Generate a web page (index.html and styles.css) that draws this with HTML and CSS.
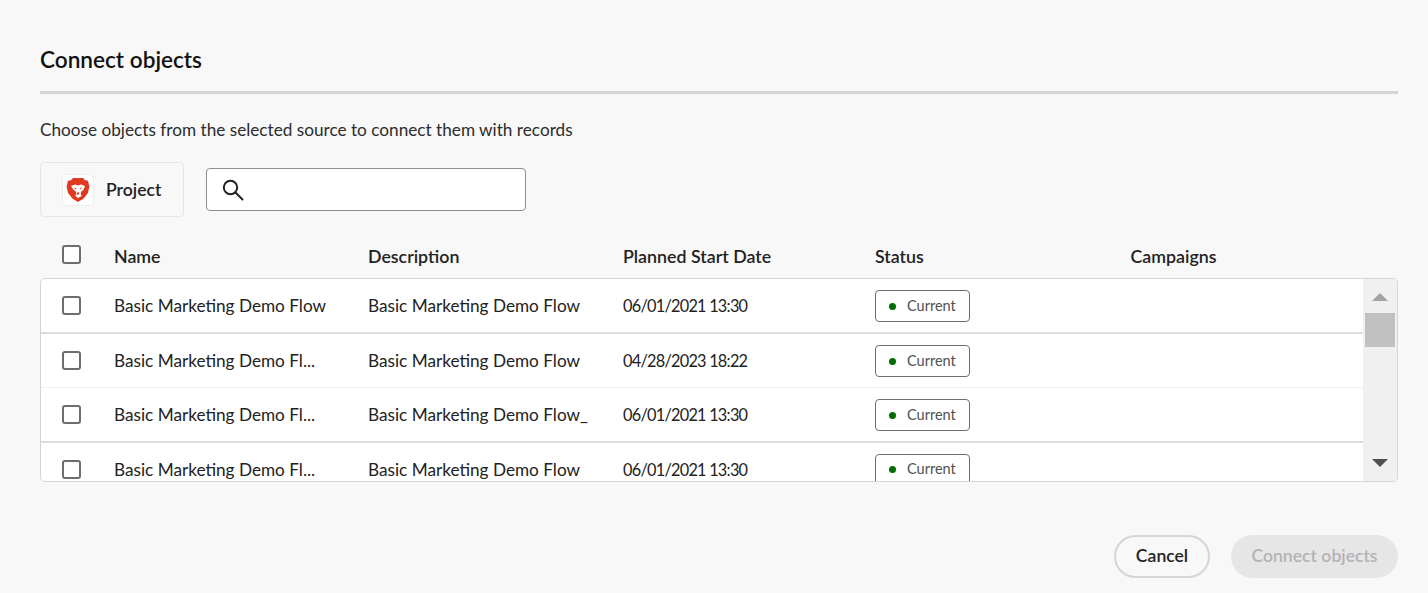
FILE: index.html
```html
<!DOCTYPE html>
<html lang="en">

<head>
    <meta charset="UTF-8">
    <title>Connect objects</title>
    <link rel="stylesheet" href="styles.css">
</head>

<body>
    <div class="dialog">
        <h2 class="title">Connect objects</h2>
        <div class="divider"></div>
        <p class="intro">Choose objects from the selected source to connect them with records</p>

        <div class="toolbar">
            <div class="source">
                <span class="source-logo">
                    <svg width="24" height="26" viewBox="0 0 24 26">
                        <path fill="#e0391f" d="M7 1h10l2 2.2 3 .6 1.4 6-1.6 6.4-4.4 5.6L12 25l-5.4-3.2-4.400-5.600L.6 9.800 2 3.800l3-.6z"/>
                        <path fill="#fff" d="M5 9l4-1.600 3 1 3-1 4 1.600-1.600 4-2 1.200-.8 3.200 1.400 1.400L12 21l-3-2.200 1.400-1.400-.8-3.200-2-1.200z"/>
                        <path fill="#e0391f" d="M7.800 10.600l2.700.6-.6 1.400zM16.200 10.600l-2.700.6.6 1.400zM10.500 17l1.500.8 1.500-.8-1.500-2.400z"/>
                    </svg>
                </span>
                <span class="source-name">Project</span>
            </div>
            <div class="search">
                <svg width="22" height="22" viewBox="0 0 22 22" fill="none" stroke="#222" stroke-width="2">
                    <circle cx="8.500" cy="8.500" r="6.700"/>
                    <path d="M13.500 13.500l7 7" stroke-linecap="round"/>
                </svg>
            </div>
        </div>

        <div class="table-head">
            <div class="cell-check"><span class="checkbox"></span></div>
            <div class="col-name">Name</div>
            <div class="col-desc">Description</div>
            <div class="col-date">Planned Start Date</div>
            <div class="col-status">Status</div>
            <div class="col-camp">Campaigns</div>
        </div>

        <div class="table-box">
            <div class="rows">
                <div class="row line-dark">
                    <div class="cell-check"><span class="checkbox"></span></div>
                    <div class="col-name">Basic Marketing Demo Flow</div>
                    <div class="col-desc"><span class="clip">Basic Marketing Demo Flow</span></div>
                    <div class="col-date">06/01/2021 13:30</div>
                    <div class="col-status"><span class="badge"><i class="dot"></i>Current</span></div>
                </div>
                <div class="row line-light">
                    <div class="cell-check"><span class="checkbox"></span></div>
                    <div class="col-name">Basic Marketing Demo Fl...</div>
                    <div class="col-desc"><span class="clip">Basic Marketing Demo Flow</span></div>
                    <div class="col-date">04/28/2023 18:22</div>
                    <div class="col-status"><span class="badge"><i class="dot"></i>Current</span></div>
                </div>
                <div class="row line-dark">
                    <div class="cell-check"><span class="checkbox"></span></div>
                    <div class="col-name">Basic Marketing Demo Fl...</div>
                    <div class="col-desc"><span class="clip">Basic Marketing Demo Flow_</span></div>
                    <div class="col-date">06/01/2021 13:30</div>
                    <div class="col-status"><span class="badge"><i class="dot"></i>Current</span></div>
                </div>
                <div class="row line-none">
                    <div class="cell-check"><span class="checkbox"></span></div>
                    <div class="col-name">Basic Marketing Demo Fl...</div>
                    <div class="col-desc"><span class="clip">Basic Marketing Demo Flow</span></div>
                    <div class="col-date">06/01/2021 13:30</div>
                    <div class="col-status"><span class="badge"><i class="dot"></i>Current</span></div>
                </div>
            </div>
            <div class="scrollbar">
                <span class="arrow-up"></span>
                <span class="thumb"></span>
                <span class="spacer"></span>
                <span class="arrow-down"></span>
            </div>
        </div>

        <div class="footer">
            <button class="btn-cancel">Cancel</button>
            <button class="btn-connect">Connect objects</button>
        </div>
    </div>
</body>

</html>
```

FILE: styles.css
```css
* {
    box-sizing: border-box;
}

html,
body {
    margin: 0;
    height: 100%;
}

body {
    background-color: #f8f8f8;
    color: #222;
    font-family: "Lato", sans-serif;
    font-size: 17.200px;
    overflow: hidden;
}

.dialog {
    padding: 44px 30px 0 40px;
}

.title {
    margin: 0;
    font-size: 22.600px;
    line-height: 32px;
    font-weight: 600;
    color: #111;
}

.divider {
    height: 3px;
    margin-top: 15px;
    background-color: #d5d5d5;
}

.intro {
    margin: 24px 0 0;
    font-size: 17.200px;
    line-height: 24px;
    color: #2c2c2c;
}

/* Source picker and search */
.toolbar {
    display: flex;
    align-items: center;
    gap: 22px;
    margin-top: 20px;
}

.source {
    display: flex;
    align-items: center;
    gap: 12px;
    width: 144px;
    height: 55px;
    padding-left: 21px;
    border: 1px solid #e6e6e6;
    border-radius: 4px;
}

.source-logo {
    display: flex;
    align-items: center;
    justify-content: center;
    width: 32px;
    height: 32px;
    background-color: #fff;
    border: 1px solid #eee;
    border-radius: 5px;
}

.source-name {
    font-size: 17.600px;
    font-weight: 600;
}

.search {
    display: flex;
    align-items: center;
    width: 320px;
    height: 43px;
    padding-left: 15px;
    background-color: #fff;
    border: 1px solid #8e8e8e;
    border-radius: 4px;
}

/* Table */
.table-head,
.row {
    display: flex;
    align-items: center;
}

.table-head {
    height: 61px;
    padding-top: 17px;
    padding-left: 1px;
    font-weight: 600;
    font-size: 17.800px;
}

.cell-check {
    display: flex;
    width: 73px;
    padding-left: 21px;
}

.table-head .cell-check {
    margin-top: -3px;
}

.checkbox {
    display: block;
    width: 19px;
    height: 19px;
    background-color: #fff;
    border: 2px solid #6d6d6d;
    border-radius: 3px;
}

.col-name {
    width: 254px;
    white-space: nowrap;
}

.col-desc {
    width: 255px;
}

.col-date {
    width: 252px;
    white-space: nowrap;
}

.row .col-date {
    font-size: 16.300px;
    letter-spacing: -.75px;
}

.col-status {
    width: 255.500px;
}

.table-box {
    display: flex;
    height: 204px;
    background-color: #fff;
    border: 1px solid #d5d5d5;
    border-radius: 5px;
    overflow: hidden;
}

.rows {
    flex: 1;
    min-width: 0;
    overflow: hidden;
}

.row {
    height: 54.500px;
}

.line-dark {
    border-bottom: 2px solid #dcdcdc;
}

.line-light {
    border-bottom: 1px solid #f0f0f0;
}

.clip {
    display: block;
    width: 222px;
    overflow: hidden;
    white-space: nowrap;
}

.badge {
    display: flex;
    align-items: center;
    width: 95px;
    height: 32px;
    margin-top: 2px;
    padding: 0 0 2px 13px;
    background-color: #fff;
    border: 1px solid #6e6e6e;
    border-radius: 4px;
    font-size: 14.500px;
    color: #505050;
}

.line-none .badge {
    margin-top: 0;
}

.dot {
    width: 7px;
    height: 7px;
    margin: 2px 11px 0 0;
    background-color: #006e00;
    border-radius: 50%;
}

.scrollbar {
    display: flex;
    flex-direction: column;
    align-items: center;
    width: 34px;
    background-color: #f0f0f0;
}

.arrow-up {
    width: 0;
    height: 0;
    margin-top: 14px;
    border-left: 8px solid transparent;
    border-right: 8px solid transparent;
    border-bottom: 8px solid #a3a3a3;
}

.thumb {
    width: 30px;
    height: 34px;
    margin-top: 12px;
    background-color: #c1c1c1;
}

.spacer {
    flex: 1;
}

.arrow-down {
    width: 0;
    height: 0;
    margin-bottom: 14px;
    border-left: 8px solid transparent;
    border-right: 8px solid transparent;
    border-top: 8px solid #505050;
}

/* Footer buttons */
.footer {
    display: flex;
    justify-content: flex-end;
    gap: 21px;
    margin-top: 53px;
}

.footer button {
    height: 43px;
    padding: 0 0 2px;
    border-radius: 22px;
    font-family: inherit;
    font-size: 17.600px;
    font-weight: 600;
}

.btn-cancel {
    width: 96px;
    background-color: transparent;
    border: 2px solid #d5d5d5;
    color: #222;
}

.btn-connect {
    width: 167px;
    background-color: #e6e6e6;
    border: 0;
    color: #b3b3b3;
}
```
